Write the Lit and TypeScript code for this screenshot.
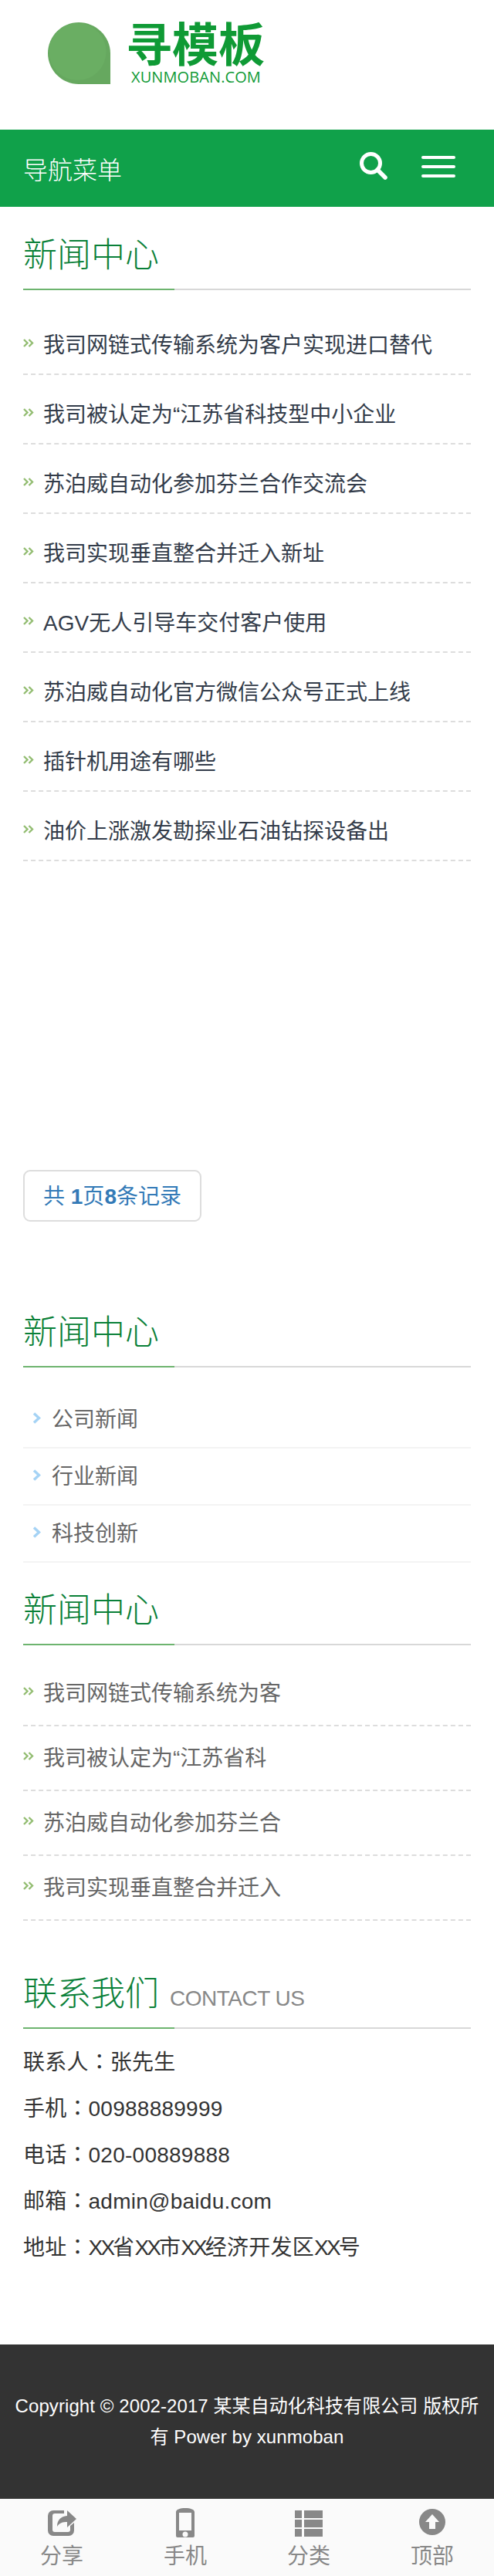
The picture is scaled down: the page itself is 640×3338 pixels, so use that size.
import { LitElement, html, css } from "lit";
import { customElement } from "lit/decorators.js";

const news = [
  "我司网链式传输系统为客户实现进口替代",
  "我司被认定为“江苏省科技型中小企业",
  "苏泊威自动化参加芬兰合作交流会",
  "我司实现垂直整合并迁入新址",
  "AGV无人引导车交付客户使用",
  "苏泊威自动化官方微信公众号正式上线",
  "插针机用途有哪些",
  "油价上涨激发勘探业石油钻探设备出",
];
const short = ["我司网链式传输系统为客", "我司被认定为“江苏省科", "苏泊威自动化参加芬兰合", "我司实现垂直整合并迁入"];
const contacts = [
  ["联系人", "张先生"],
  ["手机", "00988889999"],
  ["电话", "020-00889888"],
  ["邮箱", "admin@baidu.com"],
  ["地址", "XX省XX市XX经济开发区XX号"],
];

const arrows = html`<svg class="arrows" viewBox="0 0 14 11"><path d="M1 1l4.500 4.500-4.500 4.500M7.500 1l4.500 4.500-4.500 4.500" fill="none" stroke="#93bd72" stroke-width="2.400"/></svg>`;

@customElement("app-root")
export class AppRoot extends LitElement {
  static styles = css`
    :host { display: block; width: 640px; background: #fff; font-family: "Liberation Sans", "Noto Sans CJK SC", sans-serif; }
    * { box-sizing: border-box; }
    .logo { height: 168px; padding: 29px 0 0 62px; display: flex; gap: 20px; align-items: flex-start; }
    .drop { width: 81px; height: 80px; display: block; }
    .brand { width: 180px; padding-top: 2px; color: #0f9a35; display: flex; flex-direction: column; }
    .brand b { font-size: 60px; line-height: 58px; height: 59px; font-weight: 700; white-space: nowrap; }
    .brand span { font-family: "Open Sans", sans-serif; font-size: 20px; line-height: 20px; padding-left: 7px; letter-spacing: 0.1px; white-space: nowrap; }
    .nav { height: 100px; background: #10a14a; color: #fff; display: flex; align-items: center; padding: 0 50px 0 30px; font-size: 32px; font-weight: 300; }
    .nav .t { flex: 1; }
    .search { width: 36px; height: 36px; margin: -6px 44px 0 0; display: block; }
    .burger { width: 44px; margin-top: -4px; display: flex; flex-direction: column; gap: 8px; }
    .burger i { display: block; height: 4px; border-radius: 2px; background: #fff; }
    .title { margin: 0 30px; height: 66px; border-bottom: 2px solid #d8d8d8; position: relative; font-size: 44px; line-height: 42px; color: #0a8038; font-weight: 300; white-space: nowrap; }
    .title::after { content: ""; position: absolute; left: 0; bottom: -2px; width: 196px; height: 2px; background: #6db46f; }
    .title small { font-size: 28px; color: #888; margin-left: 14px; letter-spacing: -0.5px; }
    .t1 { margin-top: 42px; }
    .t2 { margin-top: 123px; }
    .t3 { margin-top: 41px; }
    .t4 { margin-top: 74px; }
    .news { list-style: none; margin: 20px 30px 0; padding: 0; }
    .news li { height: 90px; padding-top: 10px; border-bottom: 2px dashed #ddd; display: flex; align-items: center; font-size: 28px; color: #333c4a; white-space: nowrap; overflow: hidden; }
    .news.short { margin-top: 21px; }
    .news.short li { height: 84px; padding: 0 0 4px; color: #666; }
    .arrows { width: 14px; height: 11px; margin: 0 12px 2px 0; flex: none; }
    .pager { display: block; margin: 400px 30px 0; height: 67px; width: 231px; border: 2px solid #ddd; border-radius: 9px; font-size: 28px; line-height: 65px; color: #337ab7; padding-left: 24px; white-space: nowrap; }
    .pager b { font-weight: 700; }
    .cats { list-style: none; margin: 31px 30px 0; padding: 0; }
    .cats li { height: 74px; padding: 0 0 4px 12px; border-bottom: 2px solid #f3f3f3; display: flex; align-items: center; font-size: 28px; color: #666; }
    .cats svg { width: 11px; height: 15px; margin-right: 14px; flex: none; }
    .contact { margin: 13px 0 96px; padding: 0 30px; font-size: 28px; color: #333; }
    .contact div { height: 60px; line-height: 56px; white-space: nowrap; letter-spacing: 0.25px; }
    .colon { font-family: "Noto Sans CJK TC", sans-serif; letter-spacing: 0; }
    .xx { letter-spacing: -2.800px; margin-right: -0.200px; }
    .footer { height: 200px; background: #333; color: #fff; text-align: center; font-size: 24px; line-height: 40px; padding: 60px 16px; letter-spacing: 0.08px; }
    .tabs { height: 100px; background: #fafafa; display: grid; grid-template-columns: repeat(4, 160px); }
    .tab { display: flex; flex-direction: column; align-items: center; color: #888; font-size: 28px; line-height: 36px; padding-top: 11px; }
    .tab svg { width: 40px; height: 40px; display: block; margin-bottom: 6px; }
  `;

  private value(v: string) {
    return v.split(/(XX)/).map((part) => (part === "XX" ? html`<span class="xx">XX</span>` : part));
  }

  render() {
    return html`
      <div class="logo">
        <svg class="drop" viewBox="0 0 81 80"><path d="M81 80H40C18 80 0 62 0 40S18 0 40 0s41 18 41 40z" fill="#66a85f"/><circle cx="38.500" cy="38" r="37" fill="#6aae63"/></svg>
        <div class="brand"><b>寻模板</b><span>XUNMOBAN.COM</span></div>
      </div>
      <div class="nav">
        <span class="t">导航菜单</span>
        <svg class="search" viewBox="0 0 36 36"><circle cx="14.500" cy="14.500" r="12" fill="none" stroke="#fff" stroke-width="5"/><path d="M23 23l10 10" stroke="#fff" stroke-width="5.500" stroke-linecap="round"/></svg>
        <div class="burger"><i></i><i></i><i></i></div>
      </div>
      <h2 class="title t1">新闻中心</h2>
      <ul class="news">${news.map((n) => html`<li>${arrows}${n}</li>`)}</ul>
      <div class="pager">共 <b>1</b>页<b>8</b>条记录</div>
      <h2 class="title t2">新闻中心</h2>
      <ul class="cats">${["公司新闻", "行业新闻", "科技创新"].map((c) => html`<li><svg viewBox="0 0 11 15"><path d="M2 1.500l6.500 6-6.500 6" fill="none" stroke="#a5d3f5" stroke-width="3.400"/></svg>${c}</li>`)}</ul>
      <h2 class="title t3">新闻中心</h2>
      <ul class="news short">${short.map((n) => html`<li>${arrows}${n}</li>`)}</ul>
      <h2 class="title t4">联系我们<small>CONTACT US</small></h2>
      <div class="contact">
        ${contacts.map(([k, v]) => html`<div>${k}<span class="colon">：</span>${this.value(v)}</div>`)}
      </div>
      <div class="footer">Copyright © 2002-2017 某某自动化科技有限公司 版权所有 Power by xunmoban</div>
      <div class="tabs">
        <div class="tab"><svg viewBox="0 0 40 40"><path fill="#888" d="M9 4h14v4H11a3 3 0 0 0-3 3v18a3 3 0 0 0 3 3h17a3 3 0 0 0 3-3v-5l5-4v10a7 7 0 0 1-7 7H9a7 7 0 0 1-7-7V11a7 7 0 0 1 7-7z"/><path fill="#888" d="M27 4l12 11-12 11v-7c-6 0-10 1-13 6 0-9 5-13 13-14z"/></svg>分享</div>
        <div class="tab"><svg viewBox="0 0 40 40"><path fill="#888" fill-rule="evenodd" d="M8 6c0-3 5-5 12-5s12 2 12 5v31a2 2 0 0 1-2 2H10a2 2 0 0 1-2-2zM12 7v23h16V7zM20 31.500a3.500 3.500 0 1 0 0 7 3.500 3.500 0 0 0 0-7z"/></svg>手机</div>
        <div class="tab"><svg viewBox="0 0 40 40"><path fill="#888" d="M2 4h9v10H2zM14 4h24v10H14zM2 16h9v10H2zM14 16h24v10H14zM2 28h9v10H2zM14 28h24v10H14z"/></svg>分类</div>
        <div class="tab"><svg viewBox="0 0 40 40"><path fill="#888" fill-rule="evenodd" d="M20 2a17 17 0 1 1 0 34 17 17 0 0 1 0-34zM20 9l-9 10h5v9h8v-9h5z"/></svg>顶部</div>
      </div>
    `;
  }
}
